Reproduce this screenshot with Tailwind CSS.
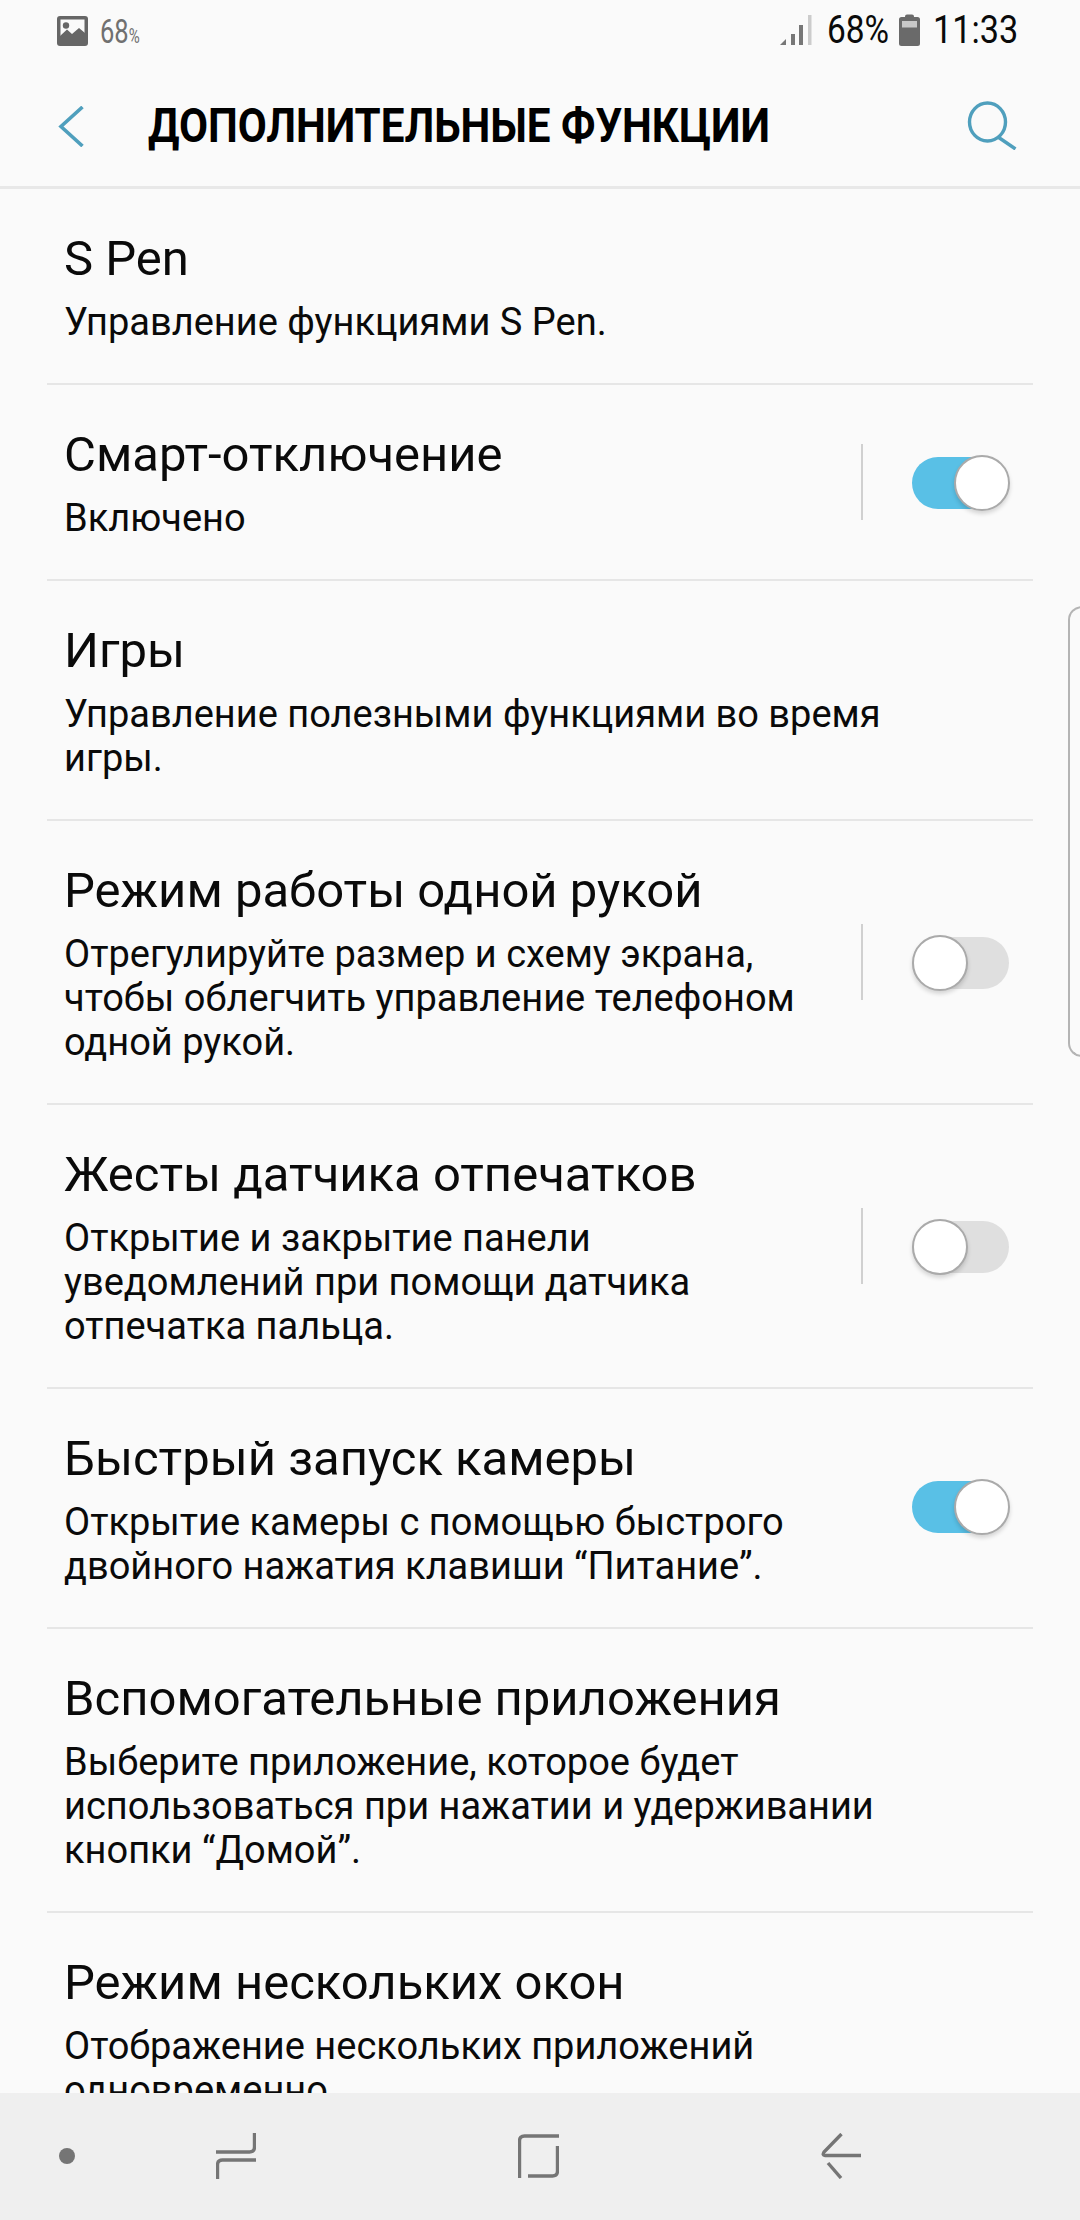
<!DOCTYPE html>
<html lang="ru">
<head>
<meta charset="utf-8">
<script src="https://cdn.jsdelivr.net/npm/@tailwindcss/browser@4"></script>
</head>
<body class="m-0">
<div class="relative w-[1080px] h-[2220px] overflow-hidden flex flex-col bg-[#fafafa] text-[#0a0a0a] font-['Roboto','Noto_Sans',sans-serif]">
  <header class="h-[189px] shrink-0 border-b-[3px] border-[#e8e8e8] relative">
    <div class="h-[60px] flex items-center justify-between pl-[57px] pr-[64px]">
      <div class="flex items-center gap-[12px]">
        <svg class="w-[31px] h-[30px] mt-[2px]" viewBox="0 0 31 30"><rect width="31" height="30" rx="3" fill="#666"/><rect x="3.5" y="3.5" width="24" height="20" fill="#fafafa"/><circle cx="9" cy="9.5" r="3.2" fill="#666"/><path d="M3 25V20L10 13.5L15 18L22 12L28 17V25Z" fill="#666"/></svg>
        <span class="text-[34px] leading-none text-[#707070] inline-block w-[38px] mt-[2px] whitespace-nowrap"><span class="inline-block scale-x-[0.75] origin-left">68<span class="text-[20px]">%</span></span></span>
      </div>
      <div class="flex items-center">
        <svg class="w-[32px] h-[32px] mr-[15px]" viewBox="0 0 32 32"><path d="M0 31L6 25V31Z" fill="#777"/><rect x="11" y="20" width="4" height="11" fill="#777"/><rect x="19" y="11" width="4" height="20" fill="#777"/><rect x="28" y="1" width="3.5" height="30" fill="#ccc"/></svg>
        <span class="text-[38px] leading-none w-[60px] whitespace-nowrap"><span class="inline-block scale-x-[0.88] origin-left">68%</span></span>
        <svg class="w-[21px] h-[32px] ml-[12px] mr-[13px]" viewBox="0 0 21 32"><path d="M6 2.5Q6 0.5 8 0.5H13Q15 0.5 15 2.5V3H18.5Q21 3 21 5.5V29.5Q21 32 18.5 32H2.5Q0 32 0 29.5V5.5Q0 3 2.5 3H6Z" fill="#6a6a6a"/><rect x="3" y="7" width="15" height="6.5" fill="#c8c8c8"/></svg>
        <span class="text-[38px] leading-none w-[83px] whitespace-nowrap"><span class="inline-block scale-x-[0.9] origin-left">11:33</span></span>
      </div>
    </div>
    <div class="absolute inset-x-0 top-[60px] h-[126px]">
      <svg class="absolute left-[58px] top-[46px] w-[26px] h-[41px]" viewBox="0 0 26 41" fill="none" stroke="#4f9fbd" stroke-width="3.6"><path d="M24.5 1L3 20.5L24.5 40"/></svg>
      <h1 class="absolute left-[148px] top-[36px] m-0 text-[49px] leading-[60px] font-bold text-black whitespace-nowrap scale-x-[0.86] origin-left">ДОПОЛНИТЕЛЬНЫЕ ФУНКЦИИ</h1>
      <svg class="absolute left-[966px] top-[40px] w-[52px] h-[50px]" viewBox="0 0 52 50" fill="none" stroke="#4f9fbd" stroke-width="3.4"><ellipse cx="21.5" cy="22" rx="18" ry="19"/><path d="M32 37L49.5 49"/></svg>
    </div>
  </header>

  <main class="flex-1 min-h-0 overflow-hidden px-[47px]">
    <div class="border-b-2 border-[#e6e6e6] pt-[39px] pb-[39px] pl-[17px]">
      <h2 class="m-0 text-[49px] leading-[62px] font-normal">S Pen</h2>
      <p class="m-0 mt-[10px] text-[38px] leading-[44px]">Управление функциями S Pen.</p>
    </div>
    <div class="relative border-b-2 border-[#e6e6e6] pt-[39px] pb-[39px] pl-[17px]">
      <h2 class="m-0 text-[49px] leading-[62px] font-normal">Смарт-отключение</h2>
      <p class="m-0 mt-[10px] text-[38px] leading-[44px]">Включено</p>
      <div class="absolute left-[814px] top-[59px] w-[2px] h-[76px] bg-[#d0d0d0]"></div>
      <div class="absolute left-[865px] top-[72px] w-[97px] h-[52px] rounded-full bg-[#59c0e6]"><div class="absolute right-[-1px] top-[-2px] w-[56px] h-[56px] rounded-full bg-white border-2 border-[#aaaaaa] shadow-[0_3px_4px_rgba(0,0,0,0.15)]"></div></div>
    </div>
    <div class="border-b-2 border-[#e6e6e6] pt-[39px] pb-[39px] pl-[17px]">
      <h2 class="m-0 text-[49px] leading-[62px] font-normal">Игры</h2>
      <p class="m-0 mt-[10px] text-[38px] leading-[44px]">Управление полезными функциями во время<br>игры.</p>
    </div>
    <div class="relative border-b-2 border-[#e6e6e6] pt-[39px] pb-[39px] pl-[17px]">
      <h2 class="m-0 text-[49px] leading-[62px] font-normal">Режим работы одной рукой</h2>
      <p class="m-0 mt-[10px] text-[38px] leading-[44px]">Отрегулируйте размер и схему экрана,<br>чтобы облегчить управление телефоном<br>одной рукой.</p>
      <div class="absolute left-[814px] top-[103px] w-[2px] h-[76px] bg-[#d0d0d0]"></div>
      <div class="absolute left-[865px] top-[116px] w-[97px] h-[52px] rounded-full bg-[#dfdfdf]"><div class="absolute left-0 top-[-2px] w-[56px] h-[56px] rounded-full bg-white border-2 border-[#aaaaaa] shadow-[0_3px_4px_rgba(0,0,0,0.15)]"></div></div>
    </div>
    <div class="relative border-b-2 border-[#e6e6e6] pt-[39px] pb-[39px] pl-[17px]">
      <h2 class="m-0 text-[49px] leading-[62px] font-normal">Жесты датчика отпечатков</h2>
      <p class="m-0 mt-[10px] text-[38px] leading-[44px]">Открытие и закрытие панели<br>уведомлений при помощи датчика<br>отпечатка пальца.</p>
      <div class="absolute left-[814px] top-[103px] w-[2px] h-[76px] bg-[#d0d0d0]"></div>
      <div class="absolute left-[865px] top-[116px] w-[97px] h-[52px] rounded-full bg-[#dfdfdf]"><div class="absolute left-0 top-[-2px] w-[56px] h-[56px] rounded-full bg-white border-2 border-[#aaaaaa] shadow-[0_3px_4px_rgba(0,0,0,0.15)]"></div></div>
    </div>
    <div class="relative border-b-2 border-[#e6e6e6] pt-[39px] pb-[39px] pl-[17px]">
      <h2 class="m-0 text-[49px] leading-[62px] font-normal">Быстрый запуск камеры</h2>
      <p class="m-0 mt-[10px] text-[38px] leading-[44px]">Открытие камеры с помощью быстрого<br>двойного нажатия клавиши “Питание”.</p>
      <div class="absolute left-[865px] top-[92px] w-[97px] h-[52px] rounded-full bg-[#59c0e6]"><div class="absolute right-[-1px] top-[-2px] w-[56px] h-[56px] rounded-full bg-white border-2 border-[#aaaaaa] shadow-[0_3px_4px_rgba(0,0,0,0.15)]"></div></div>
    </div>
    <div class="border-b-2 border-[#e6e6e6] pt-[39px] pb-[39px] pl-[17px]">
      <h2 class="m-0 text-[49px] leading-[62px] font-normal">Вспомогательные приложения</h2>
      <p class="m-0 mt-[10px] text-[38px] leading-[44px]">Выберите приложение, которое будет<br>использоваться при нажатии и удерживании<br>кнопки “Домой”.</p>
    </div>
    <div class="pt-[39px] pl-[17px]">
      <h2 class="m-0 text-[49px] leading-[62px] font-normal">Режим нескольких окон</h2>
      <p class="m-0 mt-[10px] text-[38px] leading-[44px]">Отображение нескольких приложений<br>одновременно.</p>
    </div>
  </main>

  <nav class="relative h-[127px] shrink-0 bg-[#efefef] z-10">
    <div class="absolute left-[59px] top-[55px] w-[16px] h-[16px] rounded-full bg-[#757575]"></div>
    <svg class="absolute left-[216px] top-[40px] w-[40px] h-[46px]" viewBox="0 0 40 46" fill="none" stroke="#757575" stroke-width="3"><path d="M38.5 0V14Q38.5 19 33.5 19H0" stroke-width="3.4"/><path d="M1.5 46V32Q1.5 27 6.5 27H40" stroke-width="3.4"/></svg>
    <svg class="absolute left-[518px] top-[41px] w-[41px] h-[44px]" viewBox="0 0 41 44" fill="none" stroke="#757575" stroke-width="3.4"><path d="M1.5 44V7Q1.5 2 6.5 2H41"/><path d="M39.5 12V37Q39.5 42 34.5 42H10"/></svg>
    <svg class="absolute left-[821px] top-[40px] w-[40px] h-[46px]" viewBox="0 0 40 46" fill="none" stroke="#757575" stroke-width="3.4"><path d="M20.5 1L3 19Q1 22.5 4 22.5H40"/><path d="M7 30L20 45"/></svg>
  </nav>

  <div class="absolute left-[1068px] top-[606px] w-[14px] h-[451px] border-2 border-[#b4b4b4] rounded-l-[16px] pointer-events-none"></div>
</div>
</body>
</html>
